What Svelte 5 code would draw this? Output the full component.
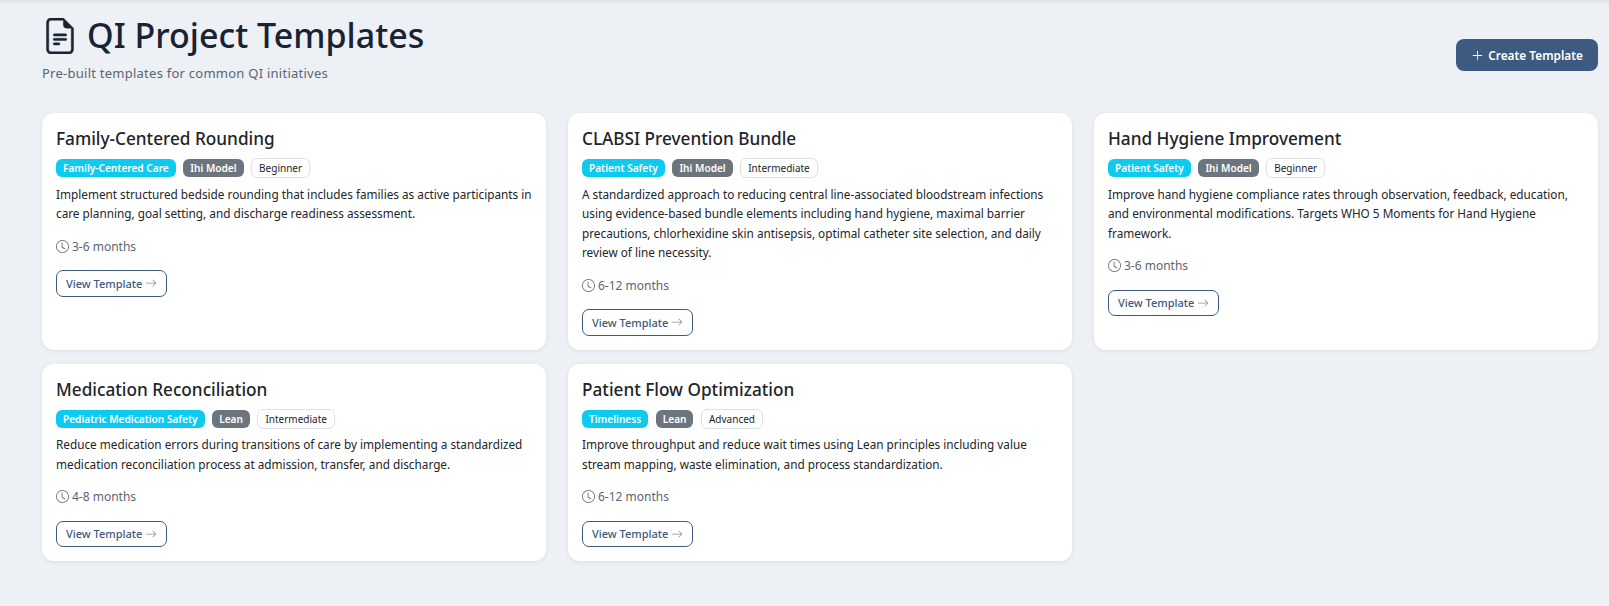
<script>
  const templates = [
    {
      title: 'Family-Centered Rounding',
      category: 'Family-Centered Care',
      method: 'Ihi Model',
      level: 'Beginner',
      description:
        'Implement structured bedside rounding that includes families as active participants in care planning, goal setting, and discharge readiness assessment.',
      duration: '3-6 months'
    },
    {
      title: 'CLABSI Prevention Bundle',
      category: 'Patient Safety',
      method: 'Ihi Model',
      level: 'Intermediate',
      description:
        'A standardized approach to reducing central line-associated bloodstream infections using evidence-based bundle elements including hand hygiene, maximal barrier precautions, chlorhexidine skin antisepsis, optimal catheter site selection, and daily review of line necessity.',
      duration: '6-12 months'
    },
    {
      title: 'Hand Hygiene Improvement',
      category: 'Patient Safety',
      method: 'Ihi Model',
      level: 'Beginner',
      description:
        'Improve hand hygiene compliance rates through observation, feedback, education, and environmental modifications. Targets WHO 5 Moments for Hand Hygiene framework.',
      duration: '3-6 months'
    },
    {
      title: 'Medication Reconciliation',
      category: 'Pediatric Medication Safety',
      method: 'Lean',
      level: 'Intermediate',
      description:
        'Reduce medication errors during transitions of care by implementing a standardized medication reconciliation process at admission, transfer, and discharge.',
      duration: '4-8 months'
    },
    {
      title: 'Patient Flow Optimization',
      category: 'Timeliness',
      method: 'Lean',
      level: 'Advanced',
      description:
        'Improve throughput and reduce wait times using Lean principles including value stream mapping, waste elimination, and process standardization.',
      duration: '6-12 months'
    }
  ];
</script>

<div class="page">
  <header class="head">
    <div>
      <h1>
        <svg class="doc" viewBox="0 0 16 16" fill="currentColor" stroke="currentColor" stroke-width="0.2" aria-hidden="true">
          <path d="M5 7.5a.5.5 0 0 1 .5-.5h5a.5.5 0 0 1 0 1h-5a.5.5 0 0 1-.5-.5zm0 2a.5.5 0 0 1 .5-.5h5a.5.5 0 0 1 0 1h-5a.5.5 0 0 1-.5-.5zm0 2a.5.5 0 0 1 .5-.5h2a.5.5 0 0 1 0 1h-2a.5.5 0 0 1-.5-.5z" />
          <path d="M9.5 0H4a2 2 0 0 0-2 2v12a2 2 0 0 0 2 2h8a2 2 0 0 0 2-2V4.5L9.5 0zm0 1v2A1.5 1.5 0 0 0 11 4.5h2V14a1 1 0 0 1-1 1H4a1 1 0 0 1-1-1V2a1 1 0 0 1 1-1h5.5z" />
        </svg>
        QI Project Templates
      </h1>
      <p class="sub">Pre-built templates for common QI initiatives</p>
    </div>
    <button class="create">
      <svg viewBox="0 0 16 16" fill="currentColor" aria-hidden="true">
        <path d="M8 2a.5.5 0 0 1 .5.5v5h5a.5.5 0 0 1 0 1h-5v5a.5.5 0 0 1-1 0v-5h-5a.5.5 0 0 1 0-1h5v-5A.5.5 0 0 1 8 2z" />
      </svg>
      Create Template
    </button>
  </header>

  <div class="grid">
    {#each templates as t}
      <div class="card">
        <h2>{t.title}</h2>
        <div class="badges">
          <span class="badge cat">{t.category}</span>
          <span class="badge method">{t.method}</span>
          <span class="badge level">{t.level}</span>
        </div>
        <p class="desc">{t.description}</p>
        <div class="duration">
          <svg viewBox="0 0 16 16" fill="currentColor" aria-hidden="true">
            <path d="M8 3.5a.5.5 0 0 0-1 0V9a.5.5 0 0 0 .25.43l3.5 2a.5.5 0 0 0 .5-.86L8 8.71V3.5z" />
            <path d="M8 16A8 8 0 1 0 8 0a8 8 0 0 0 0 16zm7-8A7 7 0 1 1 1 8a7 7 0 0 1 14 0z" />
          </svg>
          {t.duration}
        </div>
        <button class="view">
          View Template
          <svg viewBox="0 0 16 16" fill="currentColor" aria-hidden="true">
            <path fill-rule="evenodd" d="M1 8a.5.5 0 0 1 .5-.5h11.79l-3.15-3.15a.5.5 0 0 1 .71-.71l4 4a.5.5 0 0 1 0 .71l-4 4a.5.5 0 0 1-.71-.71L13.29 8.5H1.5A.5.5 0 0 1 1 8z" />
          </svg>
        </button>
      </div>
    {/each}
  </div>
</div>

<style>
  :global(body) {
    margin: 0;
    background: #edf0f5;
    font-family: "Noto Sans", "Open Sans", sans-serif;
    color: #212529;
  }
  .page {
    height: 606px;
    box-sizing: border-box;
    padding: 9px 11px 0 42px;
    box-shadow: inset 0 6px 6px -6px rgba(0, 0, 0, 0.12);
  }
  .head {
    display: flex;
    justify-content: space-between;
    align-items: center;
    margin-bottom: 30px;
  }
  h1 {
    margin: 0;
    display: flex;
    align-items: center;
    gap: 9px;
    font-size: 34px;
    font-weight: 500;
    line-height: 53px;
    color: #1a2332;
  }
  .doc {
    width: 36px;
    height: 36px;
  }
  .sub {
    margin: 1px 0 0;
    font-size: 13px;
    letter-spacing: 0.25px;
    color: #5c6573;
    line-height: 20px;
  }
  .create {
    display: flex;
    align-items: center;
    gap: 4px;
    height: 32px;
    margin-top: 18px;
    padding: 0 15px;
    background: #3d5a80;
    color: #fff;
    border: none;
    border-radius: 8px;
    font: 600 11.85px "Noto Sans", sans-serif;
  }
  .create svg {
    width: 13px;
    height: 13px;
  }
  .grid {
    display: grid;
    grid-template-columns: repeat(3, 1fr);
    column-gap: 22px;
    row-gap: 14px;
  }
  .card {
    background: #fff;
    border-radius: 12px;
    padding: 14px;
    box-shadow: 0 1px 4px rgba(0, 0, 0, 0.08);
  }
  h2 {
    margin: 0 0 7px;
    font-size: 17.2px;
    font-weight: 500;
    line-height: 24px;
    color: #212529;
  }
  .badges {
    display: flex;
    align-items: center;
    gap: 7.5px;
    margin-bottom: 6.5px;
  }
  .badge {
    font-size: 10.1px;
    line-height: 18px;
    padding: 0 7px;
    border-radius: 6px;
    font-weight: 600;
  }
  .cat {
    background: #0dcaf0;
    color: #fff;
  }
  .method {
    background: #6c757d;
    color: #fff;
  }
  .level {
    background: #fff;
    color: #212529;
    border: 1px solid #dee2e6;
    font-size: 10px;
    font-weight: 400;
  }
  .desc {
    margin: 0 0 13px;
    font-size: 11.78px;
    line-height: 19.5px;
  }
  .duration {
    display: flex;
    align-items: center;
    gap: 3px;
    font-size: 12px;
    line-height: 19.5px;
    color: #5c6573;
    margin-bottom: 14px;
  }
  .duration svg {
    width: 13px;
    height: 13px;
  }
  .view {
    display: inline-flex;
    align-items: center;
    gap: 2.5px;
    height: 26.5px;
    padding: 0 9px;
    background: #fff;
    color: #3d5a80;
    border: 1px solid #3d5a80;
    border-radius: 7px;
    font: 500 11px "Noto Sans", sans-serif;
  }
  .view svg {
    width: 12px;
    height: 12px;
    color: #8a94a3;
  }
</style>
